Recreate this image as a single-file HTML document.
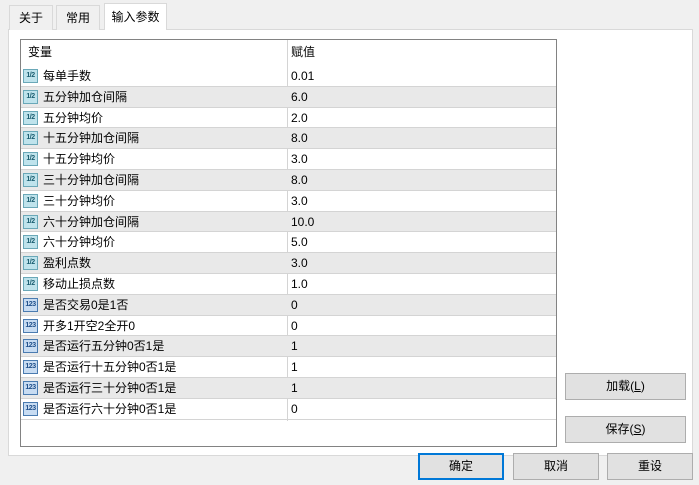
<!DOCTYPE html>
<html><head><meta charset="utf-8"><style>
*{margin:0;padding:0;box-sizing:border-box}
body{width:699px;height:485px;background:#f0f0f0;position:relative;overflow:hidden;font-family:"Liberation Sans","Noto Sans CJK SC",sans-serif;font-size:12px;color:#000}
.tab{position:absolute;top:5px;height:25px;border:1px solid #d9d9d9;border-bottom:none;background:#f0f0f0;text-align:center;line-height:24px}
.panel{position:absolute;left:8px;top:29px;width:685px;height:427px;background:#fff;border:1px solid #d9d9d9}
.tbl{position:absolute;left:20px;top:39px;width:537px;height:408px;border:1px solid #828282;background:#fff}
.hdr{position:absolute;left:0;top:0;width:535px;height:26px;line-height:24px}
.row{position:absolute;left:0;width:535px;height:20.8px;border-bottom:1px solid #d4d4d4;line-height:20px}
.row.g{background:#e9e9e9}
.c1{position:absolute;left:22px}
.c2{position:absolute;left:270px}
.div{position:absolute;left:266px;top:0;width:1px;height:381px;background:#d4d4d4}
.ic{position:absolute;left:2px;top:3px;width:15px;height:14px;border:1px solid #6aa8b8;background:#bfe3ec;font-size:7px;line-height:12px;text-align:center;color:#1b5d70;font-weight:bold;letter-spacing:-0.5px}
.ic.n{border-color:#4a7bb0;background:#c8dcf2;color:#1f4f8a}
.btn{position:absolute;height:27px;border:1px solid #adadad;background:#e1e1e1;text-align:center;line-height:25px}
</style></head><body>
<div class="panel"></div>
<div class="tab" style="left:9px;width:44px">关于</div>
<div class="tab" style="left:56px;width:44px">常用</div>
<div class="tab" style="left:104px;top:3px;height:27px;width:63px;background:#fff;line-height:26px">输入参数</div>
<div class="tbl">
<div class="hdr"><span class="c1" style="left:7px">变量</span><span class="c2">赋值</span></div>
<div class="div"></div>
<div class="row" style="top:26px"><div class="ic">1/2</div><span class="c1">每单手数</span><span class="c2">0.01</span></div>
<div class="row g" style="top:46.8px"><div class="ic">1/2</div><span class="c1">五分钟加仓间隔</span><span class="c2">6.0</span></div>
<div class="row" style="top:67.6px"><div class="ic">1/2</div><span class="c1">五分钟均价</span><span class="c2">2.0</span></div>
<div class="row g" style="top:88.4px"><div class="ic">1/2</div><span class="c1">十五分钟加仓间隔</span><span class="c2">8.0</span></div>
<div class="row" style="top:109.2px"><div class="ic">1/2</div><span class="c1">十五分钟均价</span><span class="c2">3.0</span></div>
<div class="row g" style="top:130px"><div class="ic">1/2</div><span class="c1">三十分钟加仓间隔</span><span class="c2">8.0</span></div>
<div class="row" style="top:150.8px"><div class="ic">1/2</div><span class="c1">三十分钟均价</span><span class="c2">3.0</span></div>
<div class="row g" style="top:171.6px"><div class="ic">1/2</div><span class="c1">六十分钟加仓间隔</span><span class="c2">10.0</span></div>
<div class="row" style="top:192.4px"><div class="ic">1/2</div><span class="c1">六十分钟均价</span><span class="c2">5.0</span></div>
<div class="row g" style="top:213.2px"><div class="ic">1/2</div><span class="c1">盈利点数</span><span class="c2">3.0</span></div>
<div class="row" style="top:234px"><div class="ic">1/2</div><span class="c1">移动止损点数</span><span class="c2">1.0</span></div>
<div class="row g" style="top:254.8px"><div class="ic n">123</div><span class="c1">是否交易0是1否</span><span class="c2">0</span></div>
<div class="row" style="top:275.6px"><div class="ic n">123</div><span class="c1">开多1开空2全开0</span><span class="c2">0</span></div>
<div class="row g" style="top:296.4px"><div class="ic n">123</div><span class="c1">是否运行五分钟0否1是</span><span class="c2">1</span></div>
<div class="row" style="top:317.2px"><div class="ic n">123</div><span class="c1">是否运行十五分钟0否1是</span><span class="c2">1</span></div>
<div class="row g" style="top:338px"><div class="ic n">123</div><span class="c1">是否运行三十分钟0否1是</span><span class="c2">1</span></div>
<div class="row" style="top:358.8px"><div class="ic n">123</div><span class="c1">是否运行六十分钟0否1是</span><span class="c2">0</span></div>
</div>
<div class="btn" style="left:565px;top:373px;width:121px">加载(<u>L</u>)</div>
<div class="btn" style="left:565px;top:416px;width:121px">保存(<u>S</u>)</div>
<div class="btn" style="left:418px;top:453px;width:86px;border:2px solid #0078d7;line-height:23px">确定</div>
<div class="btn" style="left:513px;top:453px;width:86px">取消</div>
<div class="btn" style="left:607px;top:453px;width:86px">重设</div>
</body></html>
